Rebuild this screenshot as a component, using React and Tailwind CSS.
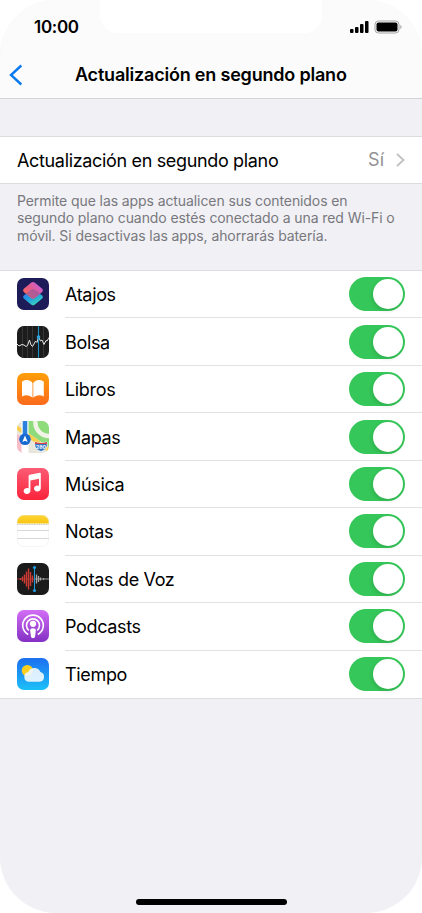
const icons = {
    atajos: (
        <>
            <defs>
                <linearGradient id="at-top" x1="0" y1="0.8" x2="0.9" y2="0.1">
                    <stop offset="0" stopColor="#ff6a50" />
                    <stop offset="0.5" stopColor="#e45c8c" />
                    <stop offset="1" stopColor="#c35fe0" />
                </linearGradient>
                <linearGradient id="at-bottom" x1="0.2" y1="0" x2="0.8" y2="1">
                    <stop offset="0" stopColor="#2f6df0" />
                    <stop offset="0.5" stopColor="#22a0e0" />
                    <stop offset="1" stopColor="#3fe0b4" />
                </linearGradient>
            </defs>
            <rect width="32" height="32" fill="#1d1b58" />
            <path d="M14 11.800Q16 10 18 11.800L25.200 17.600Q26.800 19 25.200 20.600L18 26.600Q16 28.200 14 26.600L6.800 20.600Q5.200 19 6.800 17.600z" fill="url(#at-bottom)" />
            <path d="M14 4.800Q16 3.200 18 4.800L25.200 10.800Q26.800 12.400 25.200 14L18 20Q16 21.500 14 20L6.800 14Q5.200 12.400 6.800 10.800z" fill="url(#at-top)" />
            <path d="M14 11.800Q16 10 18 11.800L23.300 15.500L18 20Q16 21.500 14 20L8.700 15.500z" fill="#8d5aa0" fillOpacity=".6" />
        </>
    ),
    bolsa: (
        <>
            <rect width="32" height="32" fill="#1c1c1d" />
            <path d="M5.500 0v32M10.500 0v32M15.500 0v32M26.500 0v32" stroke="#363637" strokeWidth="1" />
            <path d="M0 18l2 2 3-1.500 2 .5 2 1.500 1.500-1 2-5.500 1.500 5 1.500 1.500L17 18l1.500-3 1.500 1.500 1.500-5.500 2 4 1.500-1 2 4.500 2-4 1 .5 2-3.500" stroke="#e4e4e4" strokeWidth="1" fill="none" />
            <path d="M21.500 0v32" stroke="#1f8fc4" strokeWidth="1.100" />
            <circle cx="21.500" cy="11" r="1.800" fill="#2aa5e0" />
        </>
    ),
    libros: (
        <>
            <defs>
                <linearGradient id="li" x1="0" y1="0" x2="0" y2="1">
                    <stop offset="0" stopColor="#ff9f0a" />
                    <stop offset="1" stopColor="#fb6a1c" />
                </linearGradient>
            </defs>
            <rect width="32" height="32" fill="url(#li)" />
            <path d="M15.500 10C13.500 6.600 8 6.200 5 8.700v14.800c3.500-2 8-1.500 10.500 1.300zM16.300 10C18.300 6.600 23.800 6.200 26.800 8.700v14.800c-3.500-2-8-1.500-10.500 1.300z" fill="#fff" />
        </>
    ),
    mapas: (
        <>
            <rect width="32" height="32" fill="#e9e6dc" />
            <path d="M11 0h21v26L11 12z" fill="#8edb7c" />
            <path d="M18.500 0A13.500 13.500 0 0 0 32 15" stroke="#f1f3e6" strokeWidth="4.500" fill="none" />
            <path d="M0 13l8 6v13H0z" fill="#f8bcc8" />
            <path d="M-1 6l34 23.500" stroke="#f9d04d" strokeWidth="4" />
            <path d="M8 0v32" stroke="#fff" strokeWidth="7" />
            <path d="M8 0v18" stroke="#2b80de" strokeWidth="4.600" />
            <circle cx="8" cy="18.300" r="5.800" fill="#1769cf" />
            <path d="M8 14.500l2.700 6.500L8 19.700 5.300 21z" fill="#fff" />
            <path d="M18 21q6 2 12 0c1 5-1 8-6 9.500-5-1.500-7-4.500-6-9.500z" fill="#3377c4" stroke="#fff" strokeWidth=".7" />
            <path d="M18 21q6 2 12 0v2H18z" fill="#d5454c" />
            <text x="24" y="27.800" textAnchor="middle" fontSize="5" fontWeight="700" fill="#fff">280</text>
        </>
    ),
    musica: (
        <>
            <defs>
                <linearGradient id="mu" x1="0" y1="0" x2="0" y2="1">
                    <stop offset="0" stopColor="#fb5c74" />
                    <stop offset="1" stopColor="#fa233b" />
                </linearGradient>
            </defs>
            <rect width="32" height="32" fill="url(#mu)" />
            <path d="M11.600 8Q11.600 7 12.600 6.800L22.900 4.700Q23.800 4.500 23.800 5.500V20.500a3.400 3 0 1 1-1.800-2.700V10.700l-8.600 1.800V23a3.400 3 0 1 1-1.800-2.700z" fill="#fff" />
        </>
    ),
    notas: (
        <>
            <defs>
                <linearGradient id="no" x1="0" y1="0" x2="0" y2="1">
                    <stop offset="0" stopColor="#ffd633" />
                    <stop offset="1" stopColor="#f8c414" />
                </linearGradient>
            </defs>
            <rect width="32" height="32" fill="#fff" />
            <rect width="32" height="8.500" fill="url(#no)" />
            <path d="M0 9.500h32" stroke="#aaa" strokeWidth=".7" strokeDasharray="1 .7" />
            <path d="M0 15.500h32M0 23.500h32" stroke="#d4d4d4" strokeWidth=".9" />
            <rect x=".25" y=".25" width="31.500" height="31.500" rx="7" fill="none" stroke="#e6e6e6" strokeWidth=".5" />
        </>
    ),
    voz: (
        <>
            <rect width="32" height="32" fill="#1b1b1c" />
            <path d="M0 16h17" stroke="#a83a35" strokeWidth=".8" />
            <path d="M17 16h15" stroke="#b5b5b5" strokeWidth=".8" />
            <path d="M3.500 15v2M5.500 13.500v5M7.500 11.500v9M9.500 8.500v15M11.500 5.500v21M13.500 9v14M15.500 12.500v7" stroke="#cf3a33" strokeWidth="1.400" />
            <path d="M19.500 11.500v9M21.500 13v6M23.500 14.500v3M26.500 15.200v1.600" stroke="#a8a8a8" strokeWidth="1.300" />
            <path d="M17.500 4.500v23" stroke="#1f9be0" strokeWidth="1" />
            <circle cx="17.500" cy="4.500" r="1.600" fill="#1f9be0" />
            <circle cx="17.500" cy="27.500" r="1.600" fill="#1f9be0" />
        </>
    ),
    podcasts: (
        <>
            <defs>
                <linearGradient id="po" x1="0" y1="0" x2="0" y2="1">
                    <stop offset="0" stopColor="#d36ef5" />
                    <stop offset="1" stopColor="#8330c4" />
                </linearGradient>
            </defs>
            <rect width="32" height="32" fill="url(#po)" />
            <path d="M11.200 24.500a10.300 10.300 0 1 1 9.600 0M11.800 20.300a6.500 6.500 0 1 1 8.400 0" stroke="#fff" strokeWidth="1.600" fill="none" />
            <circle cx="16" cy="13.800" r="3.100" fill="#fff" />
            <path d="M13.200 20.500q0-2.300 2.800-2.300t2.800 2.300l-.7 5.700q-.3 2-2.100 2t-2.100-2z" fill="#fff" />
        </>
    ),
    tiempo: (
        <>
            <defs>
                <linearGradient id="ti" x1="0" y1="0" x2="0" y2="1">
                    <stop offset="0" stopColor="#1d6ff0" />
                    <stop offset="1" stopColor="#1cc0f8" />
                </linearGradient>
            </defs>
            <rect width="32" height="32" fill="url(#ti)" />
            <circle cx="10.300" cy="12.500" r="5.600" fill="#ffcf1f" />
            <path d="M12 23.700a4.900 4.900 0 0 1-.8-9.700 6.600 6.600 0 0 1 12.200.1A4.900 4.900 0 0 1 22.800 23.700z" fill="#eef7fe" fillOpacity=".92" />
        </>
    ),
};

const apps = [
    { name: "Atajos", icon: "atajos" },
    { name: "Bolsa", icon: "bolsa" },
    { name: "Libros", icon: "libros" },
    { name: "Mapas", icon: "mapas" },
    { name: "Música", icon: "musica" },
    { name: "Notas", icon: "notas" },
    { name: "Notas de Voz", icon: "voz" },
    { name: "Podcasts", icon: "podcasts" },
    { name: "Tiempo", icon: "tiempo" },
];

function StatusBar() {
    return (
        <div className="relative flex h-[52px] items-center justify-between pl-[34px] pr-5 pt-0.5">
            <div className="absolute left-[100px] top-0 h-[33px] w-[222px] rounded-b-[18px] bg-white" />
            <span className="text-[17px] font-semibold leading-5 tracking-[-0.3px]">10:00</span>
            <svg width="53" height="14" viewBox="0 0 53 14">
                <rect x="1" y="9" width="3.500" height="4" rx="1" />
                <rect x="6" y="7" width="3.500" height="6" rx="1" />
                <rect x="11" y="4" width="3.500" height="9" rx="1" />
                <rect x="16" y="1" width="3.500" height="12" rx="1" />
                <rect x="26" y="1" width="24" height="12" rx="3.500" fill="none" stroke="#a3a3a3" />
                <rect x="27.500" y="2.500" width="21" height="9" rx="2" />
                <path d="M51.300 5v4q1.300-.6 1.300-2t-1.300-2z" fill="#a3a3a3" />
            </svg>
        </div>
    );
}

function Toggle() {
    return (
        <button role="switch" aria-checked="true" className="flex h-[34px] w-14 items-center justify-end rounded-full bg-[#35c759] pr-0.5">
            <span className="size-[30px] rounded-full bg-white shadow-[-1px_2px_4px_rgba(0,0,0,0.12)]" />
        </button>
    );
}

function AppRow({ app, last }) {
    return (
        <li className={`flex flex-1 items-center pl-[17px] ${last ? "border-b border-[#dddde1]" : ""}`}>
            <svg className="mb-px size-8 shrink-0 rounded-[7px]" viewBox="0 0 32 32">{icons[app.icon]}</svg>
            <div className={`ml-4 flex h-full flex-1 items-center justify-between pr-[17px] ${last ? "" : "border-b border-[#e2e2e5]"}`}>
                <span className="pt-0.5 text-[18px] leading-6 tracking-[-0.34px]">{app.name}</span>
                <Toggle />
            </div>
        </li>
    );
}

export default function App() {
    return (
        <div className="h-[913px] w-[422px] overflow-hidden bg-white font-[Inter,sans-serif] text-black">
            <div className="flex h-full flex-col overflow-hidden rounded-[56px] bg-[#f0f0f5]">
                <header className="h-[99px] shrink-0 border-b border-[#d3d3d6] bg-[#fbfbfb]">
                    <StatusBar />
                    <div className="flex h-[46px] items-center pl-[9px]">
                        <svg width="14" height="22" viewBox="0 0 14 22" fill="none" stroke="#0a7aef" strokeWidth="2.400">
                            <path d="M12.300 1.500L2 11l10.300 9.500" />
                        </svg>
                        <h1 className="ml-[52px] whitespace-nowrap text-[18px] font-semibold leading-6 tracking-[-0.2px]">Actualización en segundo plano</h1>
                    </div>
                </header>

                <button className="mt-[37px] flex h-12 shrink-0 items-center border-y border-[#dddde1] bg-white pl-[17px] pr-[17px] text-left">
                    <span className="flex-1 pt-0.5 text-[18px] leading-6 tracking-[-0.34px]">Actualización en segundo plano</span>
                    <span className="mr-3 text-[18px] leading-6 text-[#929295]">Sí</span>
                    <svg width="9" height="14" viewBox="0 0 9 14" fill="none" stroke="#c1c1c5" strokeWidth="1.900">
                        <path d="M1 1l6.500 6L1 13" />
                    </svg>
                </button>
                <p className="ml-[17px] mt-2 h-[78px] shrink-0 whitespace-nowrap text-[14px] leading-[17.400px] tracking-[-0.09px] text-[#78787d]">
                    Permite que las apps actualicen sus contenidos en<br />
                    segundo plano cuando estés conectado a una red Wi-Fi o<br />
                    móvil. Si desactivas las apps, ahorrarás batería.
                </p>

                <ul className="flex h-[429px] shrink-0 flex-col border-t border-[#dddde1] bg-white">
                    {apps.map((app, i) => (
                        <AppRow key={app.name} app={app} last={i === apps.length - 1} />
                    ))}
                </ul>

                <div className="mx-auto mb-2 mt-auto h-[6px] w-[151px] rounded-full bg-black" />
            </div>
        </div>
    );
}
